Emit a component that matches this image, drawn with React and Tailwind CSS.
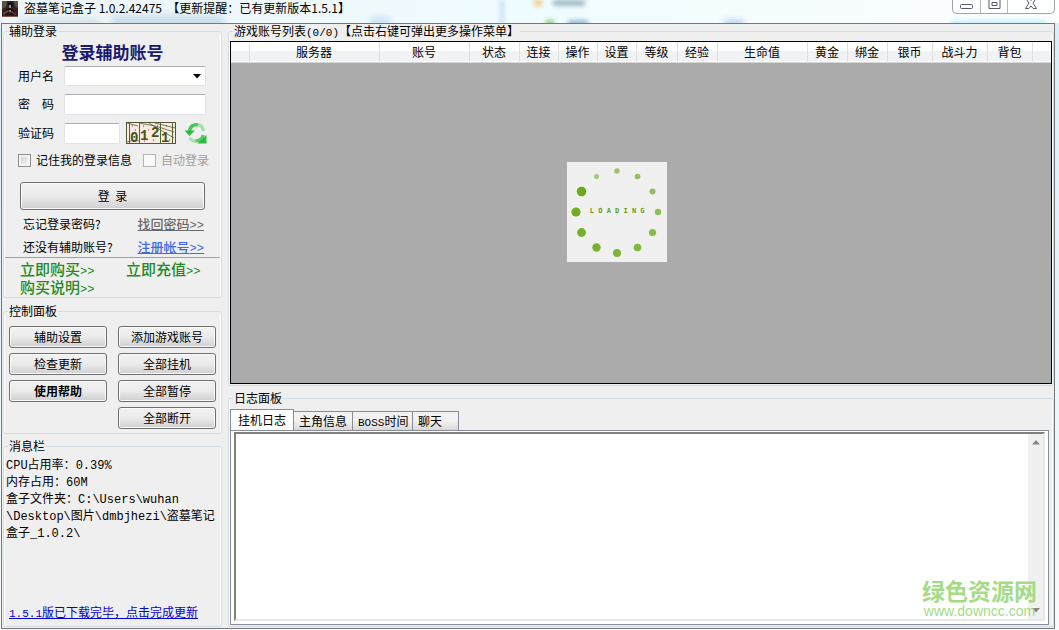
import React, { useState } from "react";

const columns = [
  ["", "w-[18px]"],
  ["服务器", "w-[130px]"],
  ["账号", "w-[90px]"],
  ["状态", "w-[50px]"],
  ["连接", "w-[39px]"],
  ["操作", "w-[39px]"],
  ["设置", "w-[39px]"],
  ["等级", "w-[41px]"],
  ["经验", "w-[40px]"],
  ["生命值", "w-[90px]"],
  ["黄金", "w-[40px]"],
  ["绑金", "w-[40px]"],
  ["银币", "w-[45px]"],
  ["战斗力", "w-[55px]"],
  ["背包", "w-[45px]"],
  ["", ""],
];

const dots = [
  [50, 9, 2.7, 0.65],
  [70.5, 14.5, 2.8, 0.68],
  [85.5, 29.5, 3, 0.7],
  [91, 50, 3.2, 0.72],
  [85.5, 70.5, 3.6, 0.77],
  [70.5, 85.5, 3.8, 0.82],
  [50, 91, 4, 0.86],
  [29.5, 85.5, 4.2, 0.89],
  [14.5, 70.5, 4.4, 0.92],
  [9, 50, 4.6, 0.96],
  [14.5, 29.5, 4.8, 1],
  [29.5, 14.5, 2.5, 0.55],
];

// Half-width characters set beside 12px Chinese text
function Half({ children }) {
  return <span className="font-['Liberation_Mono',monospace] text-[11px] leading-none">{children}</span>;
}

function Wide({ children }) {
  return <span className="font-['Liberation_Mono',monospace] text-[12px] leading-none">{children}</span>;
}

function Group({ title, className = "", children }) {
  return (
    <fieldset className={"min-w-0 rounded-[3px] border border-[#d3dce2] shadow-[inset_1px_0_0_#fff,inset_-1px_0_0_#fff] " + className}>
      <legend className="ml-1 px-px leading-[14px]">{title}</legend>
      {children}
    </fieldset>
  );
}

function PushButton({ className = "", children }) {
  return (
    <button
      type="button"
      className={
        "rounded-[3px] border border-[#707070] bg-linear-to-b from-[#f2f2f2] from-0% via-[#ebebeb] via-50% to-[#cfcfcf] text-center shadow-[inset_0_0_0_1px_#fafafa] " +
        className
      }
    >
      {children}
    </button>
  );
}

function AppIcon() {
  return (
    <svg width="16" height="16" viewBox="0 0 16 16" aria-hidden="true">
      <rect width="16" height="16" fill="#2b2422" />
      <path d="M0 0h5l-1 6-4 2zM12 0h4v7l-3-2z" fill="#5a5048" />
      <path d="M6 2l3-1 2 2-1 3H7z" fill="#0e0c0c" />
      <path d="M7 4h2v3H7z" fill="#a98a74" />
      <path d="M4 8l4-1 4 2 1 5H3z" fill="#151214" />
      <path d="M1 12l5-3 1 1-5 4zM10 10l4 3-1 1-4-3z" fill="#8a3a2c" />
      <path d="M7 9l1 4 1-4z" fill="#a09890" />
      <path d="M0 15h16v1H0z" fill="#7c5a45" />
    </svg>
  );
}

function Captcha() {
  return (
    <svg className="overflow-visible" width="50" height="22" viewBox="0 0 50 22" role="img" aria-label="验证码图片">
      <rect x=".5" y=".5" width="49" height="21" fill="#fbe9e4" stroke="#55593c" />
      <path d="M3.5 1v20M13.5 1v20M34.5 1v20M46.5 1v20" stroke="#4c6a2c" fill="none" />
      <path d="M1 1L12 4M13 1q17 2 35 9M23 1q13 8 25 15M29 1l20 5M1 20q6-3 13-1" stroke="#55622e" fill="none" strokeWidth=".8" />
      <path d="M6 4h1M9 8h1M17 4h1M22 8h1M18 19h1M27 18h1M31 4h1M40 4h1M43 18h1M37 13h1M7 12h1" stroke="#704230" />
      <g fill="#3e5715" fontFamily="Liberation Mono, monospace" fontSize="14" fontWeight="bold">
        <text x="4" y="20">0</text>
        <text x="14" y="18">1</text>
        <text x="25" y="15">2</text>
        <text x="35" y="20">1</text>
      </g>
    </svg>
  );
}

function RefreshIcon() {
  return (
    <svg width="23" height="22" viewBox="0 0 23 22" aria-hidden="true">
      <path d="M14 3C9 2 6 4.500 5.500 9" fill="none" stroke="#45c95a" strokeWidth="3.600" />
      <path d="M.5 8.500h10.500L5.500 14z" fill="#2dbb45" />
      <path d="M14 2.500c3.500.8 5 3.200 5.300 6.500" fill="none" stroke="#9be3a4" strokeWidth="3.200" />
      <path d="M5.500 16C7.500 18.500 9.500 19.300 12 19" fill="none" stroke="#a3e6ab" strokeWidth="3.200" />
      <path d="M11.500 19c4.500-.3 7-2.500 7.700-6" fill="none" stroke="#4fcd62" strokeWidth="3.400" />
      <path d="M12.500 14.500v7.500L22 20.500V11z" fill="#2dbb45" fillOpacity="0" />
      <path d="M22.500 13v8.500h-9z" fill="#2dbb45" />
    </svg>
  );
}

function TitleBar() {
  return (
    <header className="relative flex h-[23px] items-start overflow-hidden bg-linear-to-r from-[#eef5f8] via-[#effcff] to-[#fdfefe]">
      <div className="absolute top-4 left-28 h-3 w-28 bg-[#a9c6dd] opacity-60 blur-[4px]" />
      <div className="absolute top-5 left-5 h-2 w-20 bg-[#b4cbd7] opacity-60 blur-[4px]" />
      <div className="absolute top-4 left-[370px] h-3 w-5 bg-[#8eb6e8] opacity-30 blur-[3px]" />
      <div className="absolute top-0 left-[500px] h-6 w-1 bg-[#c9def2] blur-[2px]" />
      <div className="absolute top-0 left-[534px] h-1.5 w-2 bg-[#f2cd87] blur-[2px]" />
      <div className="absolute top-0 left-[553px] h-1.5 w-8 bg-[#82a0ac] opacity-70 blur-[2px]" />
      <div className="absolute top-5 left-[546px] h-1.5 w-2 bg-[#96ce78] blur-[2px]" />
      <div className="absolute top-5 left-[568px] h-1.5 w-5 bg-[#7d9cc4] opacity-70 blur-[2px]" />
      <div className="absolute top-5 left-[724px] h-1.5 w-5 bg-[#7597d4] opacity-50 blur-[3px]" />
      <div className="absolute top-5 left-[950px] h-1.5 w-24 bg-[#c8f3fb] blur-[2px]" />
      <div className="relative flex flex-1 items-start gap-[6px] pt-px pl-0.5">
        <AppIcon />
        <h1 className="text-[12px] leading-[14px] whitespace-pre text-black">{"盗墓笔记盒子 1.0.2.42475  【更新提醒：已有更新版本1.5.1】"}</h1>
      </div>
      <div className="relative mr-1 flex h-[14px] rounded-b-[5px] border border-t-0 border-[#9da3a8] bg-[#fcfeff]/80">
        <button type="button" aria-label="最小化" className="flex w-[28px] justify-center border-r border-[#b3b8bc]">
          <svg width="13" height="10" viewBox="0 0 13 10"><rect x=".5" y="4.500" width="12" height="4" rx="1" fill="#fff" stroke="#555b66" /></svg>
        </button>
        <button type="button" aria-label="最大化" className="flex w-[27px] justify-center border-r border-[#b3b8bc]">
          <svg width="13" height="10" viewBox="0 0 13 10"><path d="M1-1h11v9.500H1z" fill="#fff" stroke="#555b66" /><path d="M4 2.500h5v3H4z" fill="#fff" stroke="#555b66" /></svg>
        </button>
        <button type="button" aria-label="关闭" className="flex w-[46px] justify-center">
          <svg width="14" height="10" viewBox="0 0 14 10"><path d="M1.500-2H5l2 2.500L9-2h3.500L9 3l3.500 5.500H9.200L7 6 4.800 8.500H1.500L5 3z" fill="#fff" stroke="#555b66" /></svg>
        </button>
      </div>
    </header>
  );
}

function LoginGroup() {
  const field = "border border-[#e0e3e9] border-t-[#abadb3] bg-white px-1 outline-none";
  return (
    <Group title="辅助登录">
      <div className="px-px pt-0.5 pb-px">
        <h2 className="text-center text-[17px] leading-6 font-bold text-[#191970]">登录辅助账号</h2>
        <div className="mt-0.5 flex h-5 items-center pl-[13px]">
          <label htmlFor="user" className="w-[46px]">用户名</label>
          <div className="relative">
            <select id="user" className={"h-5 w-[142px] appearance-none rounded-[2px] " + field}>
              <option></option>
            </select>
            <svg className="pointer-events-none absolute top-2 right-1" width="9" height="5" viewBox="0 0 9 5"><path d="M0 0h8L4 4.500z" fill="#000" /></svg>
          </div>
        </div>
        <div className="mt-2 flex h-5 items-center pl-[13px]">
          <label htmlFor="pass" className="flex w-[46px] justify-between pr-[10px]"><span>密</span><span>码</span></label>
          <input id="pass" type="password" className={"h-[21px] w-[142px] rounded-[2px] " + field} />
        </div>
        <div className="mt-2 flex h-[22px] items-center pl-[13px]">
          <label htmlFor="code" className="w-[46px]">验证码</label>
          <input id="code" type="text" className={"mr-[6px] h-[21px] w-[56px] rounded-[2px] " + field} />
          <Captcha />
          <button type="button" aria-label="刷新验证码" className="ml-2"><RefreshIcon /></button>
        </div>
        <div className="mt-2 flex h-4 items-center pl-[13px]">
          <label className="flex items-center gap-[5px]">
            <input type="checkbox" className="h-[13px] w-[13px] appearance-none border border-[#8e8f8f] bg-linear-to-br from-[#c9cdd2] to-[#fbfbfb] shadow-[inset_0_0_0_2px_#f4f4f4]" />
            记住我的登录信息
          </label>
          <label className="ml-[11px] flex items-center gap-[5px] whitespace-nowrap text-[#a0a0a0]">
            <input type="checkbox" disabled className="h-[13px] w-[13px] appearance-none border border-[#b4b4b4] bg-[#f9f9f9]" />
            自动登录
          </label>
        </div>
        <div className="mt-3.5 flex pr-[15px] pl-[15px]">
          <PushButton className="h-7 flex-1 whitespace-pre">{"登  录"}</PushButton>
        </div>
        <div className="mt-1.5 flex h-4 items-center justify-between pr-4 pl-[18px]">
          <span>忘记登录密码?</span>
          <a href="#recover" className="text-[13px] font-medium text-[#696969] underline">找回密码<Wide>&gt;&gt;</Wide></a>
        </div>
        <div className="mt-[7px] flex h-4 items-center justify-between pr-4 pl-[18px]">
          <span>还没有辅助账号?</span>
          <a href="#register" className="text-[13px] font-medium text-[#4169e1] underline">注册帐号<Wide>&gt;&gt;</Wide></a>
        </div>
        <hr className="mt-0.5 mb-0.5 border-[#a0a0a0]" />
        <div className="grid grid-cols-2 pl-[15px] text-[15px] leading-[18px] font-medium text-[#228b22]">
          <a href="#buy">立即购买<Wide>&gt;&gt;</Wide></a>
          <a href="#recharge" className="pl-[6px]">立即充值<Wide>&gt;&gt;</Wide></a>
          <a href="#guide">购买说明<Wide>&gt;&gt;</Wide></a>
        </div>
      </div>
    </Group>
  );
}

function ControlGroup() {
  return (
    <Group title="控制面板" className="mt-1.5">
      <div className="grid grid-cols-2 gap-x-[11px] gap-y-[5px] px-[5px] pt-2 pb-1">
        <PushButton className="h-[22px]">辅助设置</PushButton>
        <PushButton className="h-[22px]">添加游戏账号</PushButton>
        <PushButton className="h-[22px]">检查更新</PushButton>
        <PushButton className="h-[22px]">全部挂机</PushButton>
        <PushButton className="h-[22px] font-bold">使用帮助</PushButton>
        <PushButton className="h-[22px]">全部暂停</PushButton>
        <PushButton className="col-start-2 h-[22px]">全部断开</PushButton>
      </div>
    </Group>
  );
}

function MessageGroup() {
  return (
    <Group title="消息栏" className="mt-[5px] flex flex-1 flex-col">
      <div className="flex flex-1 flex-col justify-between pt-0.5 pb-1.5">
        <div className="pl-0.5 leading-[17px] whitespace-nowrap">
          <p><Wide>CPU</Wide>占用率：<Wide>0.39%</Wide></p>
          <p>内存占用：<Wide>60M</Wide></p>
          <p>
            盒子文件夹：<Wide>C:\Users\wuhan</Wide>
            <br />
            <Wide>\Desktop\</Wide>图片<Wide>\dmbjhezi\</Wide>盗墓笔记
            <br />
            盒子<Wide>_1.0.2\</Wide>
          </p>
        </div>
        <a href="#update" className="pl-[5px] leading-4 text-[#0000d0] underline"><Half>1.5.1</Half>版已下载完毕，点击完成更新</a>
      </div>
    </Group>
  );
}

function AccountList() {
  return (
    <Group title={<>游戏账号列表<Half>(0/0)</Half>【点击右键可弹出更多操作菜单】</>} className="flex flex-1 flex-col">
      <div className="mx-px mt-0.5 mb-px flex flex-1 flex-col border border-black bg-[#ababab]">
        <table className="w-full table-fixed border-collapse">
          <thead>
            <tr className="h-5 border-b border-[#d5d5d5] bg-linear-to-b from-white from-45% to-[#f1f2f4] to-50%">
              {columns.map(([name, width], i) => (
                <th key={i} scope="col" className={"border-r border-[#dfe0e2] p-0 text-center leading-[19px] font-normal last:border-r-0 " + width}>
                  {name}
                </th>
              ))}
            </tr>
          </thead>
        </table>
        <div className="mt-[99px] ml-[41%] grid h-[100px] w-[100px] bg-[#f0f0f0]">
          <svg className="col-start-1 row-start-1" width="100" height="100" viewBox="0 0 100 100" aria-hidden="true">
            {dots.map(([cx, cy, r, o], i) => (
              <circle key={i} cx={cx} cy={cy} r={r} fill="#6aaa18" fillOpacity={o} />
            ))}
          </svg>
          <span className="col-start-1 row-start-1 self-center text-center font-['DejaVu_Sans_Mono',monospace] text-[7px] leading-none font-bold text-[#5f9f10]">L O A D I N G</span>
        </div>
      </div>
    </Group>
  );
}

const tabs = [
  ["挂机日志", "w-[64px]"],
  ["主角信息", "w-[59px]"],
  ["BOSS时间", "w-[60px]"],
  ["聊天", "w-[46px]"],
];

function LogPanel() {
  const [active, setActive] = useState(0);
  return (
    <Group title="日志面板" className="mt-[5px]">
      <div className="mt-1 mr-1 mb-px ml-px">
        <div role="tablist" className="flex h-[21px] items-end">
          {tabs.map(([name, width], i) => (
            <button
              key={name}
              type="button"
              role="tab"
              aria-selected={active === i}
              onClick={() => setActive(i)}
              className={
                "border border-[#898c95] border-b-0 text-left whitespace-nowrap " +
                width +
                (active === i
                  ? " h-[21px] bg-white pl-[7px]"
                  : " h-[19px] border-l-0 bg-linear-to-b from-[#f2f2f2] from-50% to-[#d8d8d8] pl-[5px]")
              }
            >
              {name.startsWith("BOSS") ? <><Half>BOSS</Half>{name.slice(4)}</> : name}
            </button>
          ))}
        </div>
        <div className="border border-[#898c95] bg-white pt-px pr-[3px] pb-[3px] pl-[3px]">
          <div className="relative flex h-[189px] border-2 border-t-[#808080] border-r-[#e8e8e8] border-b-[#e8e8e8] border-l-[#808080] bg-white">
            <textarea aria-label="日志内容" readOnly className="min-w-0 flex-1 resize-none bg-white p-1 outline-none" />
            <div className="flex w-[15px] flex-col items-center justify-between bg-[#f0f0f0] py-1.5">
              <svg width="8" height="5" viewBox="0 0 8 5"><path d="M0 4.500h8L4 0z" fill="#858585" /></svg>
              <svg width="8" height="5" viewBox="0 0 8 5"><path d="M0 0h8L4 4.500z" fill="#858585" /></svg>
            </div>
            <div className="pointer-events-none absolute right-1.5 bottom-0 text-center text-[#a5db86]">
              <div className="text-[23px] leading-[26px] font-bold">绿色资源网</div>
              <div className="font-['Liberation_Sans',sans-serif] text-[14px] leading-4">www.downcc.com</div>
            </div>
          </div>
        </div>
      </div>
    </Group>
  );
}

export default function App() {
  return (
    <div className="flex min-h-screen flex-col bg-linear-to-b from-[#dcedf5] to-[#f8fbfc] font-['Noto_Sans_CJK_SC',sans-serif] text-[12px] leading-4 text-black">
      <TitleBar />
      <main className="mr-1 mb-px ml-px flex flex-1 gap-[6px] border border-[#73787d] bg-[#efefef] pb-px pl-px">
        <div className="flex w-[219px] shrink-0 flex-col">
          <LoginGroup />
          <ControlGroup />
          <MessageGroup />
        </div>
        <div className="flex min-w-0 flex-1 flex-col">
          <AccountList />
          <LogPanel />
        </div>
      </main>
    </div>
  );
}
